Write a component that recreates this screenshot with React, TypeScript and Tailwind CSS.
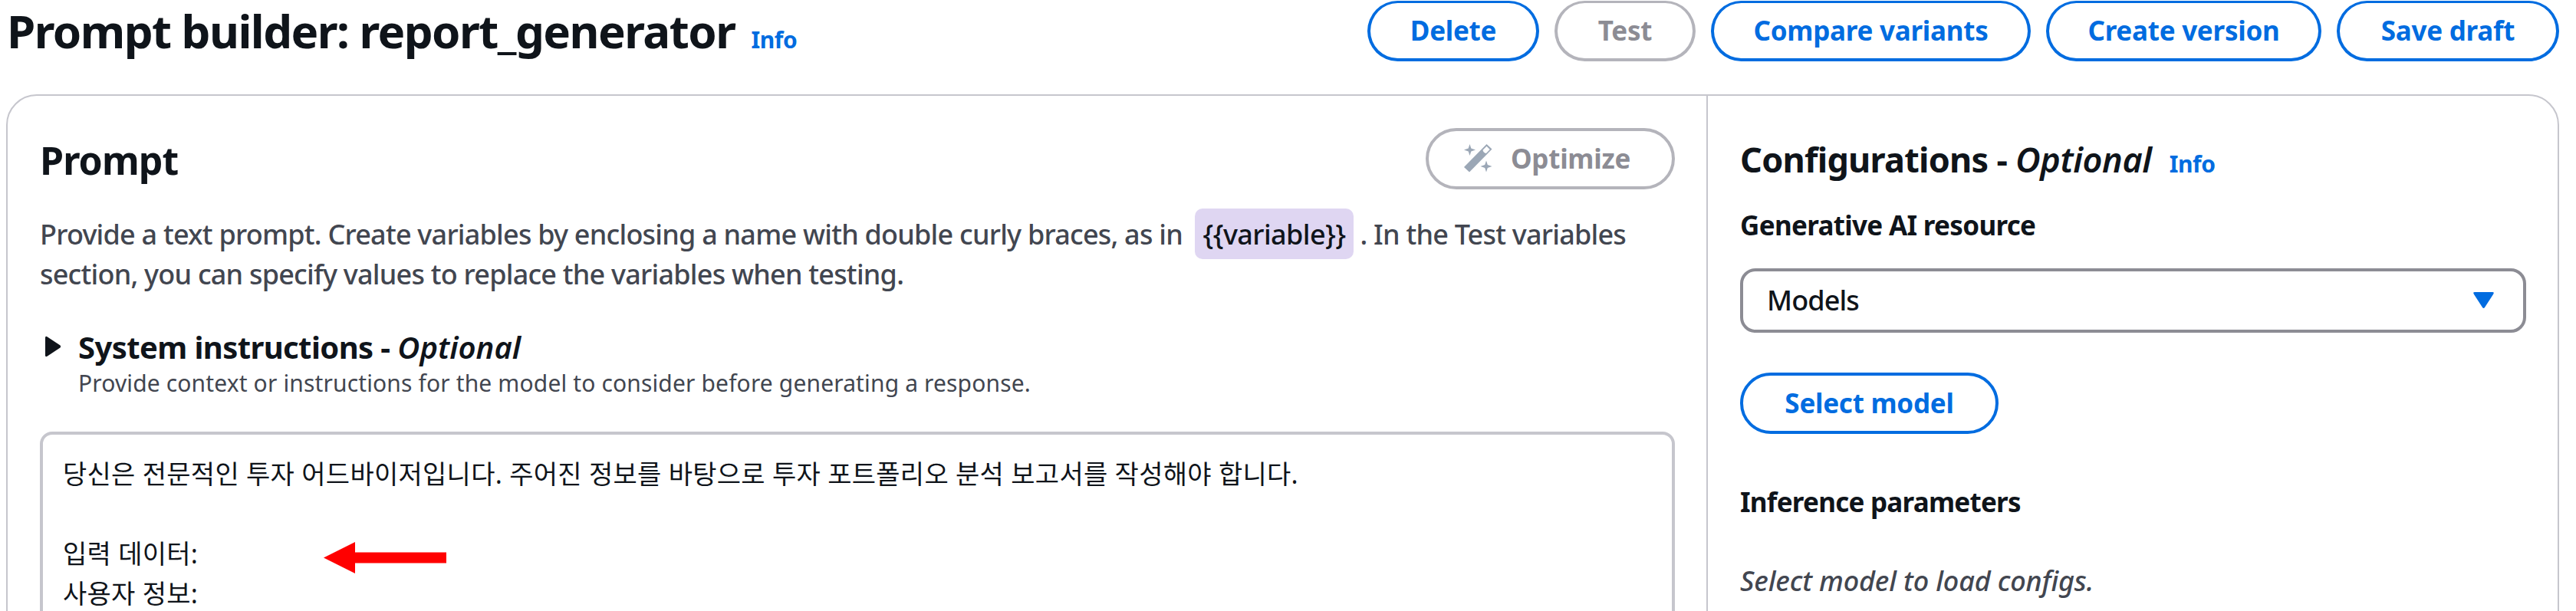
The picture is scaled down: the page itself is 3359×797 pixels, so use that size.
import type { ReactNode } from "react";

type ButtonProps = { className: string; disabled?: boolean; children: ReactNode };

function Button({ className, disabled, children }: ButtonProps) {
  const tone = disabled ? "border-[#b4b4bb] text-[#8c8c94]" : "border-[#006ce0] text-[#006ce0]";
  return (
    <button
      className={`flex shrink-0 items-center justify-center whitespace-nowrap rounded-[40px] border-[4px] bg-white text-[35px] font-bold leading-[50px] tracking-[-0.25px] ${tone} ${className}`}
    >
      {children}
    </button>
  );
}

function InfoLink() {
  return <a className="text-[30px] font-bold tracking-[-0.4px] text-[#006ce0]">Info</a>;
}

function WandIcon() {
  return (
    <svg width="37" height="37" viewBox="0 0 37 37" fill="#9ba7b6">
      <path fillRule="evenodd" d="M29.500 0 36.500 6.500 7 36.500 0 30ZM29.500 2.800 24.500 7.800Q25.500 11.500 28.800 12L33.700 7Z" />
      <path d="M7.500 0 9.300 5.500 15 7.500 9.300 9.500 7.500 15 5.700 9.500 0 7.500 5.700 5.500ZM29 21.500 30.800 27 36.500 29 30.800 31 29 36.500 27.200 31 21.500 29 27.200 27Z" />
    </svg>
  );
}

const promptText = [
  "당신은 전문적인 투자 어드바이저입니다. 주어진 정보를 바탕으로 투자 포트폴리오 분석 보고서를 작성해야 합니다.",
  "",
  "입력 데이터:",
  "사용자 정보:",
].join("\n");

export default function App() {
  return (
    <div className="relative flex h-[797px] w-[3359px] flex-col overflow-hidden bg-white font-['Noto_Sans','Noto_Sans_CJK_KR',sans-serif] text-[#0f141a]">
      <header className="flex h-[123px] shrink-0 items-start justify-between pl-[9px] pr-[22px] pt-px">
        <div className="flex items-baseline gap-[21px]">
          <h1 className="whitespace-nowrap text-[60px] font-bold leading-[79px] tracking-[-1.55px]">Prompt builder: report_generator</h1>
          <InfoLink />
        </div>
        <div className="flex gap-[20px]">
          <Button className="h-[79px] w-[224px] border-t-[3px]">Delete</Button>
          <Button className="h-[79px] w-[184px] border-t-[3px]" disabled>Test</Button>
          <Button className="h-[79px] w-[417px] border-t-[3px]">Compare variants</Button>
          <Button className="h-[79px] w-[359px] border-t-[3px]">Create version</Button>
          <Button className="h-[79px] w-[290px] border-t-[3px]">Save draft</Button>
        </div>
      </header>

      <main className="ml-[8px] flex h-[720px] w-[3329px] shrink-0 rounded-t-[40px] border-2 border-[#c6c6cd]">
        <section className="w-[2217px] shrink-0 border-r-2 border-[#c6c6cd] pl-[42px] pr-[41px] pt-[42px]">
          <div className="flex items-center justify-between">
            <h2 className="pt-[4px] text-[50px] font-bold leading-[60px] tracking-[-0.9px]">Prompt</h2>
            <Button className="h-[80px] w-[325px] gap-[24px] pb-px pr-[8px]" disabled>
              <WandIcon />
              Optimize
            </Button>
          </div>

          <p className="mt-[33px] whitespace-nowrap text-[36px] font-medium leading-[52px] tracking-[-0.78px] text-[#424650]">
            Provide a text prompt. Create variables by enclosing a name with double curly braces, as in{" "}
            <span className="ml-[7px] mr-[8px] rounded-[10px] bg-[#dfd6f2] px-[11px] pb-[8px] pt-[9px] tracking-[-0.6px] text-[#0f141a]">{"{{variable}}"}</span>
            . In the Test variables
            <br />
            section, you can specify values to replace the variables when testing.
          </p>

          <div className="mt-[43px] flex">
            <svg className="mt-[11px] w-[50px] shrink-0" height="28" viewBox="0 0 50 28" fill="#0f141a">
              <path d="M7 2.500Q7 0 9.500 1.200L26.500 12.500Q28 14 26.500 15.500L9.500 26.800Q7 28 7 25.500Z" />
            </svg>
            <div>
              <h3 className="text-[40px] font-bold leading-[52px] tracking-[-0.6px]">
                System instructions - <i className="font-semibold tracking-[0px]">Optional</i>
              </h3>
              <p className="text-[30px] leading-[41px] tracking-[0.14px] text-[#424650]">
                Provide context or instructions for the model to consider before generating a response.
              </p>
            </div>
          </div>

          <div className="mt-[43px] h-[400px] whitespace-pre-line rounded-[16px] border-4 border-[#c6c6cd] px-[26px] pt-[25px] text-[34px] leading-[52px] tracking-[0.27px]">
            {promptText}
          </div>
        </section>

        <section className="w-[1108px] shrink-0 pl-[42px] pr-[41px] pt-[53px]">
          <div className="flex items-baseline gap-[23px]">
            <h2 className="whitespace-nowrap text-[45px] font-bold leading-[60px] tracking-[-0.75px]">
              Configurations - <i className="font-semibold tracking-[-0.4px]">Optional</i>
            </h2>
            <InfoLink />
          </div>
          <h4 className="mt-[31px] text-[35px] font-bold leading-[50px] tracking-[-0.68px]">Generative AI resource</h4>
          <div className="mt-[31px] flex h-[84px] items-center justify-between rounded-[20px] border-4 border-[#8c8c94] pb-[1px] pl-[31px] pr-[38px] text-[36px] font-medium leading-[50px] tracking-[-0.9px]">
            Models
            <svg width="27" height="21" viewBox="0 0 27 21" fill="#006ce0">
              <path d="M2 0H25Q28 0 26 3L15 20Q13.500 22 12 20L1 3Q-1 0 2 0Z" />
            </svg>
          </div>
          <Button className="mt-[52px] h-[80px] w-[337px] pb-px">Select model</Button>
          <h4 className="mt-[64px] text-[35px] font-bold leading-[50px] tracking-[-0.75px]">Inference parameters</h4>
          <p className="mt-[53px] text-[36px] font-medium italic leading-[50px] tracking-[-0.15px] text-[#424650]">Select model to load configs.</p>
        </section>
      </main>

      <svg className="absolute left-[422px] top-[707px]" width="160" height="41" viewBox="0 0 160 41" fill="#ff0000">
        <path d="M0 20.500 41 0V13.500H160V27.500H41V41Z" />
      </svg>
    </div>
  );
}
